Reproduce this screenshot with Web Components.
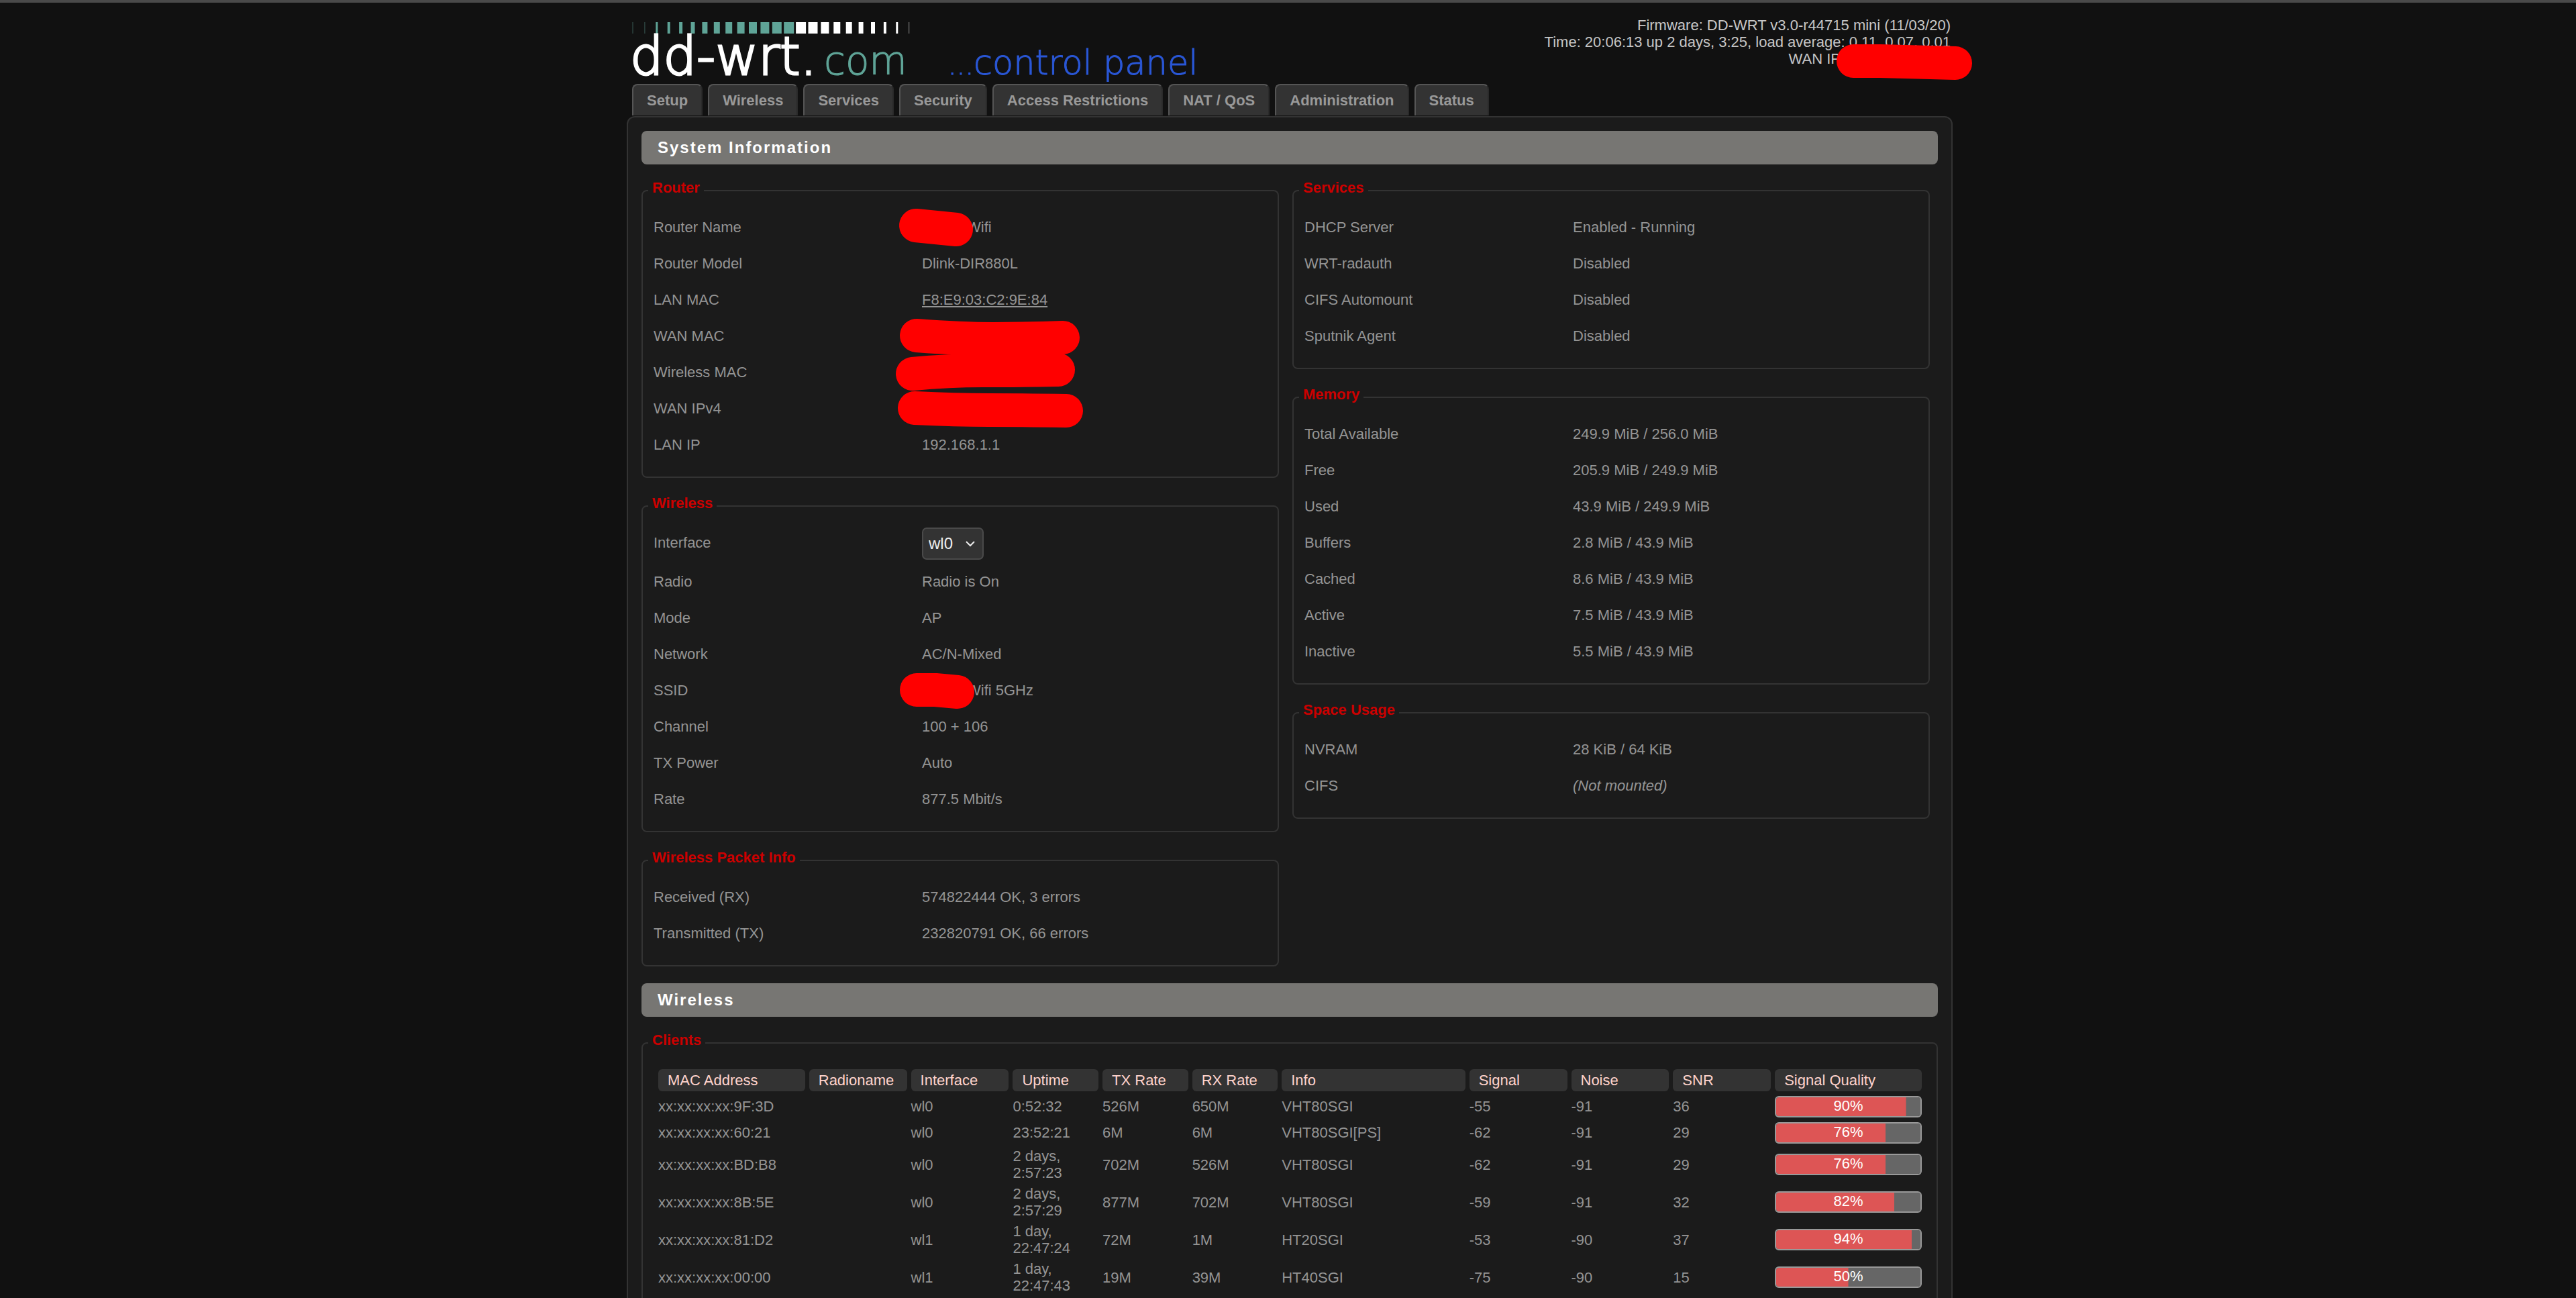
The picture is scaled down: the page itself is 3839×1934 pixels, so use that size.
<!DOCTYPE html>
<html lang="en">
<head>
<meta charset="utf-8">
<title>DD-WRT Control Panel - System Information</title>
<style>
  html { background: #111; scrollbar-width: none; }
  body {
    margin: 0;
    background: #111;
    color: #949494;
    font: 22px/25px "Liberation Sans", Arial, sans-serif;
  }
</style>
</head>
<body>
<wrt-page>
  <wrt-header slot="header">
    <div>Firmware: DD-WRT v3.0-r44715 mini (11/03/20)</div>
    <div>Time: 20:06:13 up 2 days, 3:25, load average: 0.11, 0.07, 0.01</div>
    <div>WAN IP<redact-mark space="164" path="M19 6H59L171 9"></redact-mark></div>
  </wrt-header>
  <wrt-tabs slot="header"></wrt-tabs>

  <section-title>System Information</section-title>
  <two-columns>
    <box-stack slot="left">
      <info-box heading="Router">
        <info-row label="Router Name"><redact-mark space="67" path="M-9 0L51 6"></redact-mark>Wifi</info-row>
        <info-row label="Router Model">Dlink-DIR880L</info-row>
        <info-row label="LAN MAC"><mac-link>F8:E9:03:C2:9E:84</mac-link></info-row>
        <info-row label="WAN MAC"><redact-mark space="170" path="M-8 2Q60 7 106 7T210 5"></redact-mark></info-row>
        <info-row label="Wireless MAC"><redact-mark space="170" path="M-14 5Q40 0 90 0T203 -1"></redact-mark></info-row>
        <info-row label="WAN IPv4"><redact-mark space="170" path="M-11 2Q50 5 100 5T215 6"></redact-mark></info-row>
        <info-row label="LAN IP">192.168.1.1</info-row>
      </info-box>
      <info-box heading="Wireless">
        <interface-row></interface-row>
        <info-row label="Radio">Radio is On</info-row>
        <info-row label="Mode">AP</info-row>
        <info-row label="Network">AC/N-Mixed</info-row>
        <info-row label="SSID"><redact-mark space="67" path="M-8 2H20L53 5"></redact-mark>Wifi 5GHz</info-row>
        <info-row label="Channel">100 + 106</info-row>
        <info-row label="TX Power">Auto</info-row>
        <info-row label="Rate">877.5 Mbit/s</info-row>
      </info-box>
      <info-box heading="Wireless Packet Info">
        <info-row label="Received (RX)">574822444 OK, 3 errors</info-row>
        <info-row label="Transmitted (TX)">232820791 OK, 66 errors</info-row>
      </info-box>
    </box-stack>
    <box-stack slot="right">
      <info-box heading="Services">
        <info-row label="DHCP Server">Enabled - Running</info-row>
        <info-row label="WRT-radauth">Disabled</info-row>
        <info-row label="CIFS Automount">Disabled</info-row>
        <info-row label="Sputnik Agent">Disabled</info-row>
      </info-box>
      <info-box heading="Memory">
        <info-row label="Total Available">249.9 MiB / 256.0 MiB</info-row>
        <info-row label="Free">205.9 MiB / 249.9 MiB</info-row>
        <info-row label="Used">43.9 MiB / 249.9 MiB</info-row>
        <info-row label="Buffers">2.8 MiB / 43.9 MiB</info-row>
        <info-row label="Cached">8.6 MiB / 43.9 MiB</info-row>
        <info-row label="Active">7.5 MiB / 43.9 MiB</info-row>
        <info-row label="Inactive">5.5 MiB / 43.9 MiB</info-row>
      </info-box>
      <info-box heading="Space Usage">
        <info-row label="NVRAM">28 KiB / 64 KiB</info-row>
        <info-row label="CIFS"><em>(Not mounted)</em></info-row>
      </info-box>
    </box-stack>
  </two-columns>

  <section-title>Wireless</section-title>
  <box-stack>
    <info-box heading="Clients"><client-table></client-table></info-box>
  </box-stack>
</wrt-page>

<script>
function element(name, render) {
  customElements.define(name, class extends HTMLElement {
    constructor() {
      super();
      this.attachShadow({ mode: "open" });
    }
    connectedCallback() {
      this.shadowRoot.innerHTML = render(this);
    }
  });
}

element("wrt-page", () => `
  <style>
    :host { display: block; border-top: 4px solid #4a4a4a; padding-left: 5px; overflow: hidden; }
    .shell { max-width: 1976px; margin: 0 auto; }
    main {
      box-sizing: border-box;
      border: 2px solid #333;
      border-radius: 12px 12px 0 0;
      background: #1b1b1b;
      padding: 20px 20px 40px;
      margin-top: 1px;
    }
  </style>
  <div class="shell"><slot name="header"></slot><main><slot></slot></main></div>`);

element("wrt-header", () => `
  <style>
    :host { display: flex; justify-content: space-between; box-sizing: border-box; height: 121px; padding: 21px 3px 0 5px; color: #c6c6c6; }
    .info { text-align: right; }
  </style>
  <wrt-logo></wrt-logo>
  <div class="info"><slot></slot></div>`);

element("wrt-logo", () => {
  const widths = [1, 1, 3, 4, 5, 6, 8, 9, 10, 11, 12, 13, 14, 15, 15, 14, 12, 10, 9, 7, 6, 4, 3, 1];
  const bars = widths.map((w, i) => {
    const teal = i < 14;
    const faint = i < 2 || i === 23;
    return `<rect x="${4 + i * 17.9 - w / 2}" y="8" width="${w}" height="17" fill="${teal ? "#5fa497" : "#fff"}" opacity="${faint ? 0.5 : 1}"/>`;
  }).join("");
  return `
  <style>
    :host { display: block; }
    svg { display: block; overflow: visible; pointer-events: none; }
    text { font-family: "DejaVu Sans", sans-serif; font-weight: 200; }
  </style>
  <svg width="860" height="110" viewBox="0 0 860 110" role="img" aria-label="dd-wrt.com ... control panel">
    ${bars}
    <text x="0" y="86" font-size="78" fill="#fff" stroke="#fff" stroke-width="3">dd-wrt.</text>
    <text x="289" y="86" font-size="58" fill="#5fa497" stroke="#5fa497" stroke-width="1">com</text>
    <text x="474" y="86" font-size="40" fill="#2a57d6" stroke="#2a57d6" stroke-width="1">...</text>
    <text x="512" y="86" font-size="51" fill="#2a57d6" stroke="#2a57d6" stroke-width="1">control panel</text>
  </svg>`;
});

element("wrt-tabs", () => `
  <style>
    :host { display: block; padding-left: 8px; }
    nav { display: flex; gap: 8px; }
    a {
      padding: 10px 20px;
      border: 2px solid #555;
      border-right-color: #2a2a2a;
      border-bottom: 0;
      border-radius: 8px 8px 0 0;
      background: #333;
      color: #999;
      font-weight: bold;
      text-decoration: none;
    }
  </style>
  <nav>${["Setup", "Wireless", "Services", "Security", "Access Restrictions", "NAT / QoS", "Administration", "Status"]
    .map(t => `<a href="#">${t}</a>`).join("")}</nav>`);

element("section-title", () => `
  <style>
    :host { display: block; }
    h2 {
      margin: 0 0 22px;
      padding: 12px 24px 13px;
      border-radius: 8px;
      background: #777673;
      color: #fff;
      font-size: 24px;
      line-height: 25px;
      letter-spacing: 2px;
    }
  </style>
  <h2><slot></slot></h2>`);

element("two-columns", () => `
  <style>
    :host { display: grid; grid-template-columns: 1fr 1fr; gap: 20px; align-items: start; padding-right: 12px; margin-bottom: 25px; }
  </style>
  <slot name="left"></slot><slot name="right"></slot>`);

element("box-stack", () => `
  <style>:host { display: flex; flex-direction: column; gap: 25px; min-width: 0; }</style>
  <slot></slot>`);

element("info-box", el => `
  <style>
    :host { display: block; }
    fieldset { margin: 0; min-width: 0; border: 2px solid #333; border-radius: 8px; padding: 11px 16px 20px; }
    legend { margin-left: -8px; padding: 0 6px 9px; color: #c00; font-weight: bold; }
  </style>
  <fieldset><legend>${el.getAttribute("heading")}</legend><slot></slot></fieldset>`);

element("info-row", el => `
  <style>
    :host { display: flex; padding: 14px 0 15px; }
    .label { flex: 0 0 400px; }
    .value { flex: 1; }
  </style>
  <div class="label">${el.getAttribute("label")}</div>
  <div class="value"><slot></slot></div>`);

element("interface-row", () => `
  <style>
    :host { display: flex; align-items: flex-start; padding: 4px 0 6px; }
    label { flex: 0 0 400px; padding-top: 10px; }
    .box { display: grid; align-items: center; }
    select, svg { grid-area: 1 / 1; }
    select {
      appearance: none;
      width: 92px;
      height: 48px;
      margin: 0;
      padding: 0 8px;
      border: 2px solid #4a4a4a;
      border-radius: 7px;
      background: #333;
      color: #eee;
      font: 24px/28px "Liberation Sans", Arial, sans-serif;
    }
    svg { justify-self: end; margin-right: 13px; pointer-events: none; }
  </style>
  <label for="iface">Interface</label>
  <div class="box">
    <select id="iface"><option>wl0</option><option>wl1</option></select>
    <svg width="14" height="10" viewBox="0 0 14 10" fill="none" stroke="#eee" stroke-width="2"><path d="M1 2L7 8L13 2"/></svg>
  </div>`);

element("mac-link", () => `
  <style>a { color: inherit; text-decoration: underline; }</style>
  <a href="#"><slot></slot></a>`);

/* Marker stroke painted over a private value; path is relative to the value's start. */
element("redact-mark", el => `
  <style>
    :host { display: inline-block; position: relative; width: ${el.getAttribute("space")}px; height: 10px; }
    svg { position: absolute; left: 0; top: 0; overflow: visible; z-index: 1; }
    path { fill: none; stroke: #f00; stroke-width: 50px; stroke-linecap: round; stroke-linejoin: round; }
  </style>
  <svg width="1" height="1" aria-hidden="true"><path d="${el.getAttribute("path")}"/></svg>`);

element("quality-bar", el => `
  <style>
    :host {
      display: block;
      box-sizing: border-box;
      height: 32px;
      border: 2px solid #999;
      border-radius: 6px;
      background: linear-gradient(#d55, #d55) 0 0 / ${el.getAttribute("value")}% 100% no-repeat #666;
      background-origin: padding-box;
      background-clip: padding-box;
      color: #fff;
      text-align: center;
    }
  </style>
  <span>${el.getAttribute("value")}%</span>`);

element("client-table", () => {
  const cols = [["MAC Address", 12], ["Radioname", 8], ["Interface", 8], ["Uptime", 7], ["TX Rate", 7], ["RX Rate", 7],
    ["Info", 15], ["Signal", 8], ["Noise", 8], ["SNR", 8], ["Signal Quality", 12]];
  const rows = [
    ["xx:xx:xx:xx:9F:3D", "", "wl0", "0:52:32", "526M", "650M", "VHT80SGI", "-55", "-91", "36", 90],
    ["xx:xx:xx:xx:60:21", "", "wl0", "23:52:21", "6M", "6M", "VHT80SGI[PS]", "-62", "-91", "29", 76],
    ["xx:xx:xx:xx:BD:B8", "", "wl0", "2 days, 2:57:23", "702M", "526M", "VHT80SGI", "-62", "-91", "29", 76],
    ["xx:xx:xx:xx:8B:5E", "", "wl0", "2 days, 2:57:29", "877M", "702M", "VHT80SGI", "-59", "-91", "32", 82],
    ["xx:xx:xx:xx:81:D2", "", "wl1", "1 day, 22:47:24", "72M", "1M", "HT20SGI", "-53", "-90", "37", 94],
    ["xx:xx:xx:xx:00:00", "", "wl1", "1 day, 22:47:43", "19M", "39M", "HT40SGI", "-75", "-90", "15", 50]
  ];
  return `
  <style>
    :host { display: block; padding: 5px 0 0 1px; }
    table { width: 100%; table-layout: fixed; border-spacing: 6px; }
    th { padding: 4px 14px; border-radius: 6px; background: #333; color: #ffd3cc; font-weight: normal; text-align: left; white-space: nowrap; }
    td { height: 33px; padding: 0; vertical-align: middle; }
  </style>
  <table>
    <colgroup>${cols.map(c => `<col style="width:${c[1]}%">`).join("")}</colgroup>
    <thead><tr>${cols.map(c => `<th scope="col">${c[0]}</th>`).join("")}</tr></thead>
    <tbody>${rows.map(r => `<tr>${r.map((v, i) => `<td>${i === 10 ? `<quality-bar value="${v}"></quality-bar>` : v}</td>`).join("")}</tr>`).join("")}</tbody>
  </table>`;
});
</script>
</body>
</html>
